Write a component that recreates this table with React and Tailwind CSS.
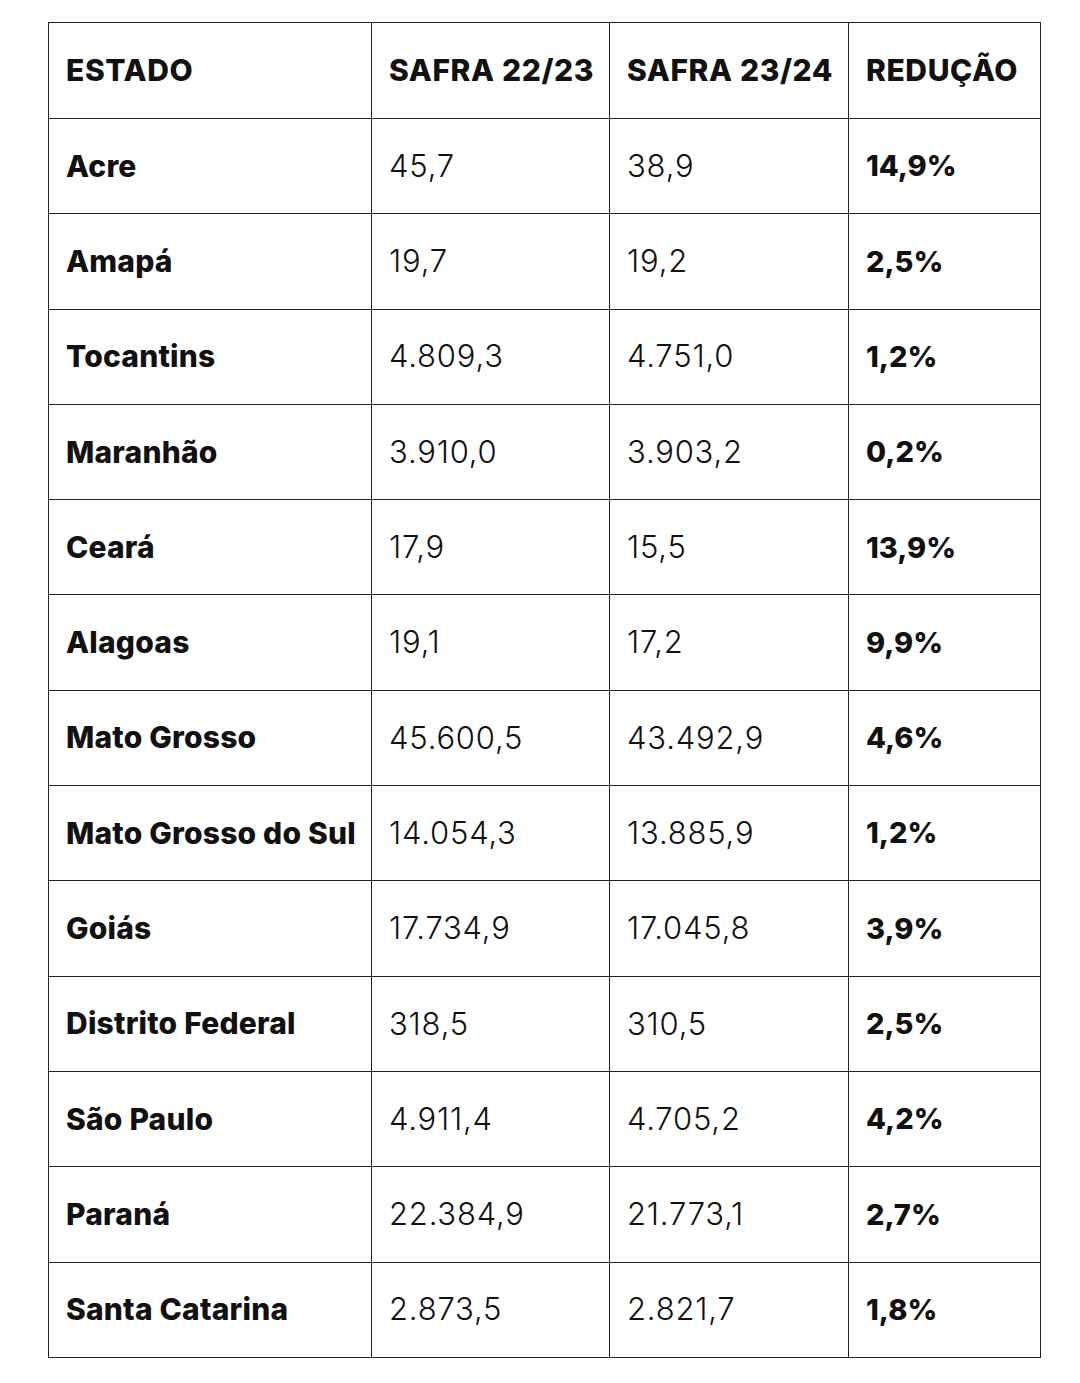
const rows = [
  ["Acre", "45,7", "38,9", "14,9%"],
  ["Amapá", "19,7", "19,2", "2,5%"],
  ["Tocantins", "4.809,3", "4.751,0", "1,2%"],
  ["Maranhão", "3.910,0", "3.903,2", "0,2%"],
  ["Ceará", "17,9", "15,5", "13,9%"],
  ["Alagoas", "19,1", "17,2", "9,9%"],
  ["Mato Grosso", "45.600,5", "43.492,9", "4,6%"],
  ["Mato Grosso do Sul", "14.054,3", "13.885,9", "1,2%"],
  ["Goiás", "17.734,9", "17.045,8", "3,9%"],
  ["Distrito Federal", "318,5", "310,5", "2,5%"],
  ["São Paulo", "4.911,4", "4.705,2", "4,2%"],
  ["Paraná", "22.384,9", "21.773,1", "2,7%"],
  ["Santa Catarina", "2.873,5", "2.821,7", "1,8%"],
];

const cols = "grid grid-cols-[323px_238px_239px_192px]";

export default function App() {
  return (
    <div className="w-[1080px] h-[1383px] bg-white pt-[22px] pl-[48px] text-[#111]" style={{ fontFamily: "Inter, 'Noto Sans', sans-serif" }}>
      <div className="w-[993px] border border-[#222]">
        <div className={`${cols} h-[95px]`}>
          {["ESTADO", "SAFRA 22/23", "SAFRA 23/24", "REDUÇÃO"].map((h, i) => (
            <div key={h} className={`flex items-center pl-[17px] text-[30px] font-extrabold tracking-[0.6px] ${i < 3 ? "border-r border-[#222]" : ""}`}>
              {h}
            </div>
          ))}
        </div>
        {rows.map((r) => (
          <div key={r[0]} className={`${cols} h-[95.3px] border-t border-[#222]`}>
            <div className="flex items-center pl-[17px] text-[30px] font-extrabold tracking-[0.2px] border-r border-[#222]">{r[0]}</div>
            <div className="flex items-center pl-[17px] text-[31px] font-light tracking-[0.8px] border-r border-[#222]">{r[1]}</div>
            <div className="flex items-center pl-[17px] text-[31px] font-light tracking-[0.8px] border-r border-[#222]">{r[2]}</div>
            <div className="flex items-center pl-[17px] text-[29px] font-extrabold">{r[3]}</div>
          </div>
        ))}
      </div>
    </div>
  );
}
